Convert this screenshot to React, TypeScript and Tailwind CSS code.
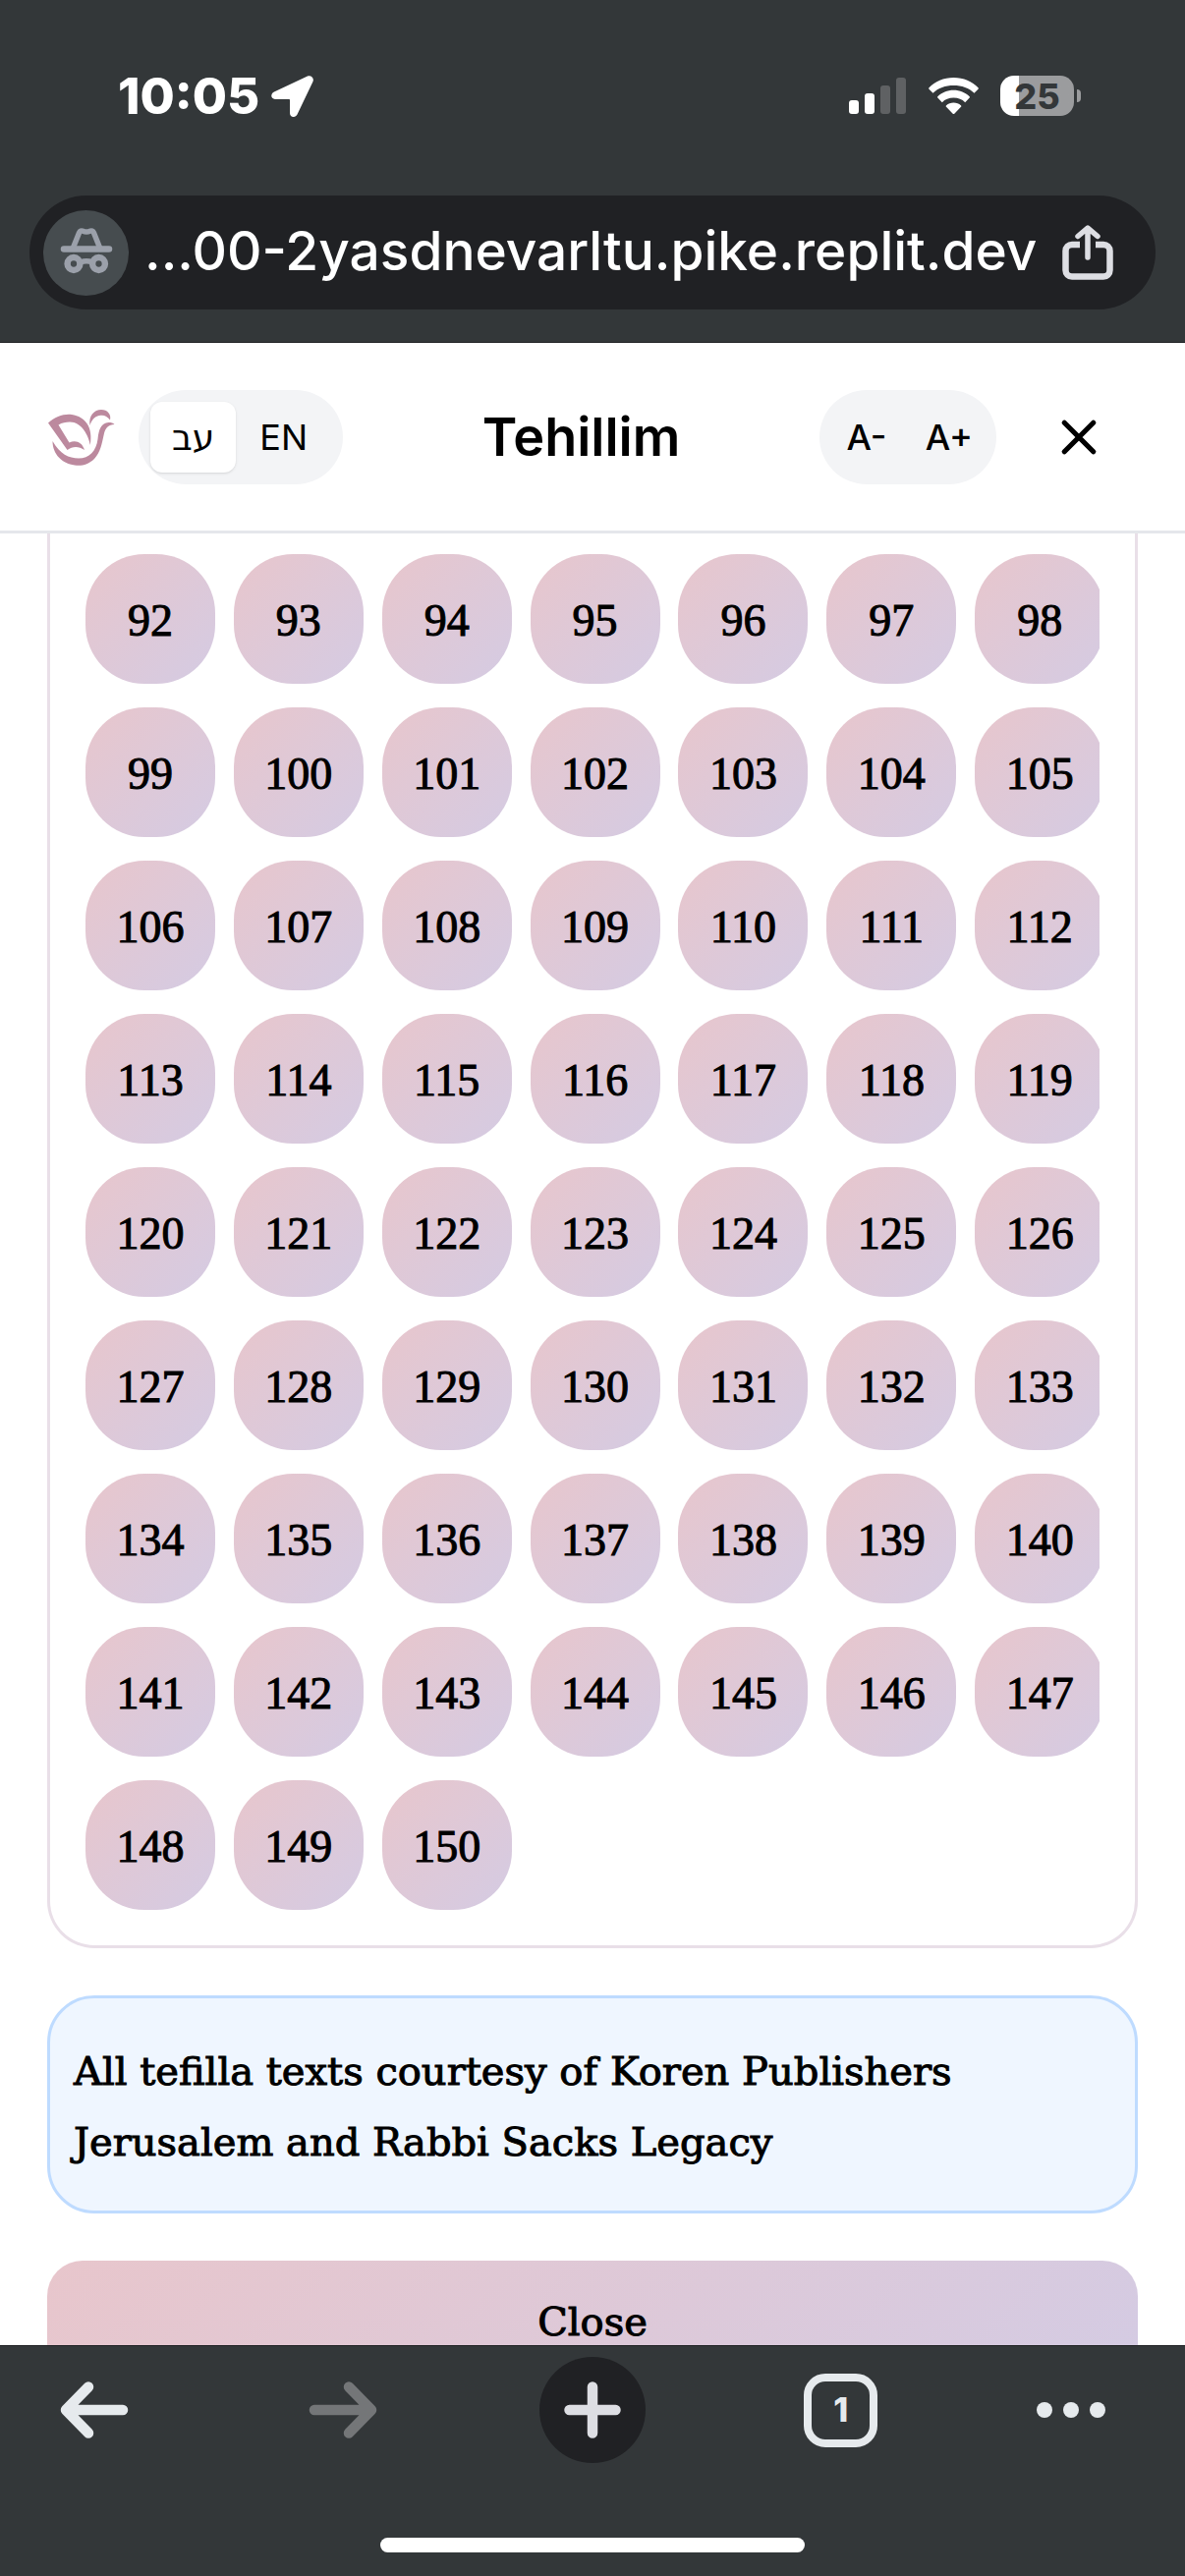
import React from "react";

const psalms = Array.from({ length: 59 }, (_, i) => 92 + i);

function StatusBar() {
  return (
    <div className="flex h-[195px] items-center justify-between pl-[120px] pr-[106px] text-white">
      <div className="flex items-center gap-3">
        <time className="text-[51px] leading-[60px] font-extrabold">10:05</time>
        <svg className="h-[42px] w-[43px]" viewBox="0 0 43 42" fill="currentColor" aria-hidden="true">
          <path d="M37 .5 3 16.500C-1 18.500-.6 24 4 24h14c.6 0 1 .4 1 1v13c0 4.500 5.500 5.500 7.500 1.500L42.500 6C44 2.500 40.500-1 37 .5Z" />
        </svg>
      </div>
      <div className="flex items-center">
        <svg className="h-[37px] w-[59px]" viewBox="0 0 59 37" role="img" aria-label="Signal">
          <rect x="0" y="23" width="10" height="14" rx="3" fill="#fff" />
          <rect x="16" y="16" width="10" height="21" rx="3" fill="#fff" />
          <rect x="32" y="8" width="10" height="29" rx="3" fill="#5f6163" />
          <rect x="48" y="0" width="10" height="37" rx="3" fill="#5f6163" />
        </svg>
        <svg className="ml-[22px] h-[37px] w-[51px]" viewBox="0 0 51 37" fill="#fff" role="img" aria-label="Wi-Fi">
          <path d="M25.500 0C35.500 0 44.500 4 50.500 10.200c.5.500.5 1 0 1.500L46.500 15.800C41 10.500 34 8 25.500 8S10 10.500 4.500 15.800L.5 11.700c-.5-.5-.5-1 0-1.500C6.500 4 15.500 0 25.500 0Z" />
          <path d="M25.500 12.700c6.300 0 12 2.500 16.200 6.500.4.400.4 1 0 1.400L37.200 25.200c-3-3.200-7-4.700-11.700-4.700s-8.700 1.500-11.700 4.700L9.300 20.600c-.4-.4-.4-1 0-1.400 4.200-4 9.900-6.500 16.200-6.500Z" />
          <path d="M25.500 25.500c2.900 0 5.400 1 7.400 2.700.6.500.6 1 .1 1.600l-6.700 6.900c-.5.400-1.100.4-1.600 0L18 29.800c-.5-.6-.5-1.100.1-1.600 2-1.700 4.500-2.700 7.400-2.700Z" />
        </svg>
        <div className="ml-[22px] flex h-[41px] w-[75px] items-center justify-center rounded-[14px] bg-linear-to-r from-white from-25% to-[#9b9c9e] to-25% text-[36px] leading-none font-extrabold text-[#333739]">
          25
        </div>
        <div className="ml-[3px] h-[13px] w-[4px] rounded-r-full bg-[#9b9c9e]" />
      </div>
    </div>
  );
}

function AddressBar() {
  return (
    <div className="mx-[30px] mt-1 mb-[33px] flex h-[116px] items-center rounded-full bg-[#202124] pr-[43px] pl-[14px]">
      <button aria-label="Incognito" className="flex size-[87px] shrink-0 items-center justify-center rounded-full bg-[#464c4f]">
        <svg className="h-[50px] w-[54px]" viewBox="0 0 54 50" fill="none" stroke="#9ba0aa" aria-hidden="true">
          <path d="M13.500 20 19.500 5C20.300 3 22 2.600 23.500 3.300q3.500 1.600 7 0C32 2.600 33.700 3 34.500 5L40.500 20" strokeWidth="5.500" />
          <path d="M4 21.500h46" strokeWidth="6.500" strokeLinecap="round" />
          <circle cx="14" cy="36.500" r="6.400" strokeWidth="6.500" />
          <circle cx="39.500" cy="36.500" r="6.400" strokeWidth="6.500" />
          <path d="M21 35q6-2.500 12 0" strokeWidth="5.500" />
        </svg>
      </button>
      <button className="min-w-0 flex-1 overflow-hidden pb-1 pl-4 text-left text-[55px] leading-[72px] font-medium whitespace-nowrap text-white">
        ...00-2yasdnevarltu.pike.replit.dev
      </button>
      <button aria-label="Share" className="shrink-0">
        <svg className="h-[56px] w-[52px]" viewBox="0 0 52 56" fill="none" stroke="#dddee3" strokeLinecap="round" strokeLinejoin="round" aria-hidden="true">
          <path d="M26 33V3.500M16 11.500l10-8.500 10 8.500" strokeWidth="5.500" />
          <path d="M18 20H10a6.500 6.500 0 0 0-6.500 6.500V46a6.500 6.500 0 0 0 6.500 6.500h32a6.500 6.500 0 0 0 6.500-6.500V26.500A6.500 6.500 0 0 0 42 20h-8" strokeWidth="6.500" strokeLinecap="butt" />
        </svg>
      </button>
    </div>
  );
}

function Logo() {
  return (
    <svg className="h-[58px] w-[69px] shrink-0" viewBox="0 0 69 58" fill="#bc899e" role="img" aria-label="Dove">
      <path fillRule="evenodd" d="M1 14.500C8 8 17 5 25 6c14 2 22 13 18.800 31C42 27 35 13.500 23 13.500c-4 0-8 .8-11.500 3L22.500 34.500c6-3 13-1 15.500 7.500-6-4-12-4-17.500 0Z" />
      <path d="M43.500 17C42 7 48 1 55 1c6.500 0 10.500 5 9 10.500-3-4.500-7-5.500-11-4.500-5 1-8 5-9.500 10Z" />
      <path d="M5.500 33C13 46 22 50.500 32 50.500 43 50.500 50 43 51.500 31c1-10 3.500-16.500 11-17 3 0 4.500.6 6 2-6 .5-9 3-10.500 9C55.500 36 54.500 44 48 51c-6 6-13 7.500-20 6.500C15 56 5.500 46 5.500 33Z" />
    </svg>
  );
}

function AppHeader() {
  return (
    <header className="flex h-[194px] shrink-0 items-center justify-between border-b-[3px] border-gray-200 bg-white px-12 text-black">
      <div className="flex items-center gap-6">
        <Logo />
        <div className="flex items-center rounded-full bg-gray-100 p-3 text-[36px] leading-[48px]">
          <button lang="he" className="rounded-xl bg-white px-[22px] py-3 shadow-sm">עב</button>
          <button className="rounded-xl px-6 py-3">EN</button>
        </div>
      </div>
      <h1 className="text-[54px] leading-[72px] font-semibold">Tehillim</h1>
      <div className="flex items-center gap-6">
        <div className="flex items-center gap-3 rounded-full bg-gray-100 p-3 text-[36px] leading-[48px] font-medium">
          <button className="h-[72px] w-[72px] whitespace-nowrap">A-</button>
          <button className="h-[72px] w-[72px] whitespace-nowrap">A+</button>
        </div>
        <button aria-label="Close" className="flex size-[120px] items-center justify-center">
          <svg className="size-[40px]" viewBox="0 0 42 42" stroke="currentColor" strokeWidth="5.500" strokeLinecap="round" aria-hidden="true">
            <path d="m5.500 5.500 31 31M36.500 5.500l-31 31" />
          </svg>
        </button>
      </div>
    </header>
  );
}

function BottomBar() {
  return (
    <footer className="flex h-[235px] shrink-0 flex-col border-t border-[#202124] bg-[#333739]">
      <nav className="mt-[11px] flex items-center justify-between pr-[81px] pl-[42px] text-[#e6eaed]">
        <button aria-label="Back" className="flex size-[108px] items-center justify-center">
          <svg className="h-[58px] w-[70px]" viewBox="0 0 70 58" fill="none" stroke="currentColor" strokeWidth="10.500" strokeLinecap="round" strokeLinejoin="round" aria-hidden="true">
            <path d="M64 29H6M29 5.500 6 29l23 23.500" />
          </svg>
        </button>
        <button aria-label="Forward" disabled className="flex size-[108px] items-center justify-center text-[#747678]">
          <svg className="h-[58px] w-[70px]" viewBox="0 0 70 58" fill="none" stroke="currentColor" strokeWidth="10.500" strokeLinecap="round" strokeLinejoin="round" aria-hidden="true">
            <path d="M6 29h58M41 5.500 64 29 41 52.500" />
          </svg>
        </button>
        <button aria-label="New tab" className="flex size-[108px] items-center justify-center rounded-full bg-[#202124] text-[#dddee3]">
          <svg className="size-[58px]" viewBox="0 0 58 58" stroke="currentColor" strokeWidth="10.500" strokeLinecap="round" aria-hidden="true">
            <path d="M29 5.500v47M5.500 29h47" />
          </svg>
        </button>
        <button aria-label="1 open tab" className="flex size-[108px] items-center justify-center">
          <span className="flex size-[75px] items-center justify-center rounded-[22px] border-8 border-current text-[34px] leading-none font-extrabold">1</span>
        </button>
        <button aria-label="More" className="flex h-[108px] w-[70px] items-center justify-between">
          <span className="size-4 rounded-full bg-current" />
          <span className="size-4 rounded-full bg-current" />
          <span className="size-4 rounded-full bg-current" />
        </button>
      </nav>
      <div className="mx-auto mt-auto mb-6 h-[15px] w-[432px] rounded-full bg-white" />
    </footer>
  );
}

export default function App() {
  return (
    <div className="flex h-screen flex-col overflow-hidden bg-white font-['Inter','Noto_Sans','DejaVu_Sans',sans-serif]">
      <div className="shrink-0 border-b border-[#202124] bg-[#333739]">
        <StatusBar />
        <AddressBar />
      </div>
      <AppHeader />
      <main className="flex min-h-0 flex-1 flex-col gap-12 overflow-hidden px-12 font-['DejaVu_Serif',serif] text-[40px] leading-[72px] text-black [-webkit-text-stroke:1px_black]">
        <section className="shrink-0 rounded-b-[48px] border-x-[3px] border-b-[3px] border-[#e9dfe8] px-9 pt-[21px] pb-9">
          <div className="grid grid-cols-7 gap-6 overflow-hidden font-['Liberation_Serif',serif] text-[46px]">
            {psalms.map((n) => (
              <button
                key={n}
                className="flex size-[132px] items-center justify-center rounded-[60px] bg-linear-135 from-[#e8c6cc] to-[#d4cbe3] pt-1"
              >
                {n}
              </button>
            ))}
          </div>
        </section>
        <p className="shrink-0 rounded-[48px] border-[3px] border-blue-200 bg-blue-50 px-6 pt-[38px] pb-[34px]">
          All tefilla texts courtesy of Koren Publishers Jerusalem and Rabbi Sacks Legacy
        </p>
        <button className="shrink-0 rounded-[36px] bg-linear-135 from-[#e8c6cc] to-[#d4cbe3] pt-[26px] pb-[22px]">Close</button>
      </main>
      <BottomBar />
    </div>
  );
}
